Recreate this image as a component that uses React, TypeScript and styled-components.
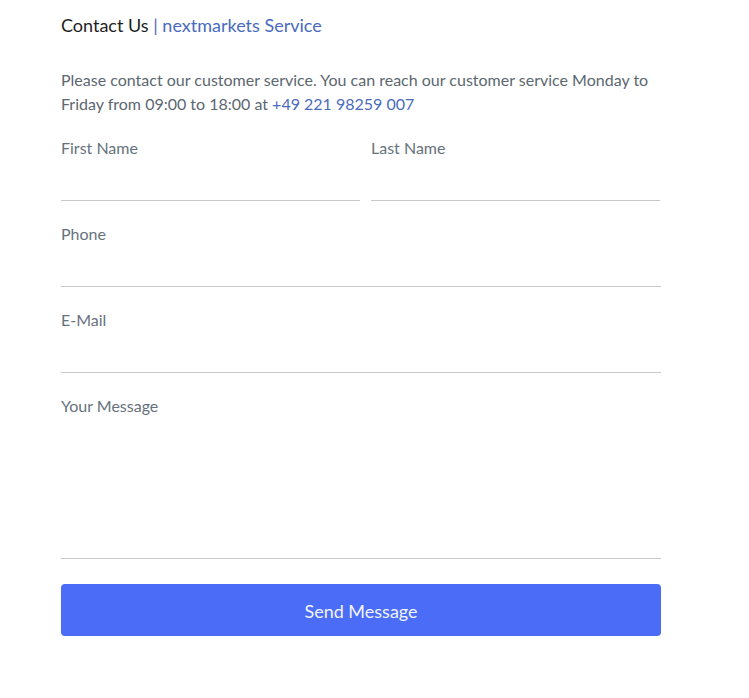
import React from "react";
import styled, { createGlobalStyle } from "styled-components";

const Global = createGlobalStyle`
  html, body { margin: 0; padding: 0; background: #fff; }
  body { font-family: Lato, "Open Sans", sans-serif; }
  * { box-sizing: border-box; }
`;

const Page = styled.div`
  width: 600px;
  margin-left: 61px;
  padding-top: 13px;
`;

const Title = styled.h1`
  margin: 0;
  font-size: 18px;
  line-height: 24px;
  font-weight: 400;
  color: #1e1e1e;
`;

const Accent = styled.span`
  color: #4a6bbd;
`;

const Intro = styled.p`
  margin: 31px 0 23px;
  font-size: 16px;
  line-height: 24px;
  color: #5c6770;
`;

const Form = styled.form`
  display: flex;
  flex-direction: column;
  gap: 24px;
`;

const Row = styled.div`
  display: grid;
  grid-template-columns: 299px 289px;
  column-gap: 11px;
`;

const Field = styled.label`
  display: flex;
  flex-direction: column;
`;

const Label = styled.span`
  font-size: 16px;
  line-height: 18px;
  color: #66727c;
`;

const Input = styled.input`
  height: 44px;
  border: none;
  border-bottom: 1px solid #c8c8c8;
  outline: none;
  font: inherit;
  font-size: 15px;
  background: transparent;
`;

const TextArea = styled.textarea`
  height: 144px;
  border: none;
  border-bottom: 1px solid #c8c8c8;
  outline: none;
  resize: none;
  font: inherit;
  background: transparent;
`;

const Button = styled.button`
  margin-top: 1px;
  height: 52px;
  padding-top: 2px;
  border: none;
  border-radius: 4px;
  background: #4a6cf7;
  color: #f2f4ff;
  font-family: Lato, sans-serif;
  font-size: 18px;
  cursor: pointer;
`;

export default function App() {
  return (
    <>
      <Global />
      <Page>
        <Title>
          Contact Us <Accent>| nextmarkets Service</Accent>
        </Title>
        <Intro>
          Please contact our customer service. You can reach our customer service Monday to
          Friday from 09:00 to 18:00 at <Accent>+49 221 98259 007</Accent>
        </Intro>
        <Form onSubmit={(e) => e.preventDefault()}>
          <Row>
            <Field>
              <Label>First Name</Label>
              <Input type="text" />
            </Field>
            <Field>
              <Label>Last Name</Label>
              <Input type="text" />
            </Field>
          </Row>
          <Field>
            <Label>Phone</Label>
            <Input type="tel" />
          </Field>
          <Field>
            <Label>E-Mail</Label>
            <Input type="email" />
          </Field>
          <Field>
            <Label>Your Message</Label>
            <TextArea />
          </Field>
          <Button type="submit">Send Message</Button>
        </Form>
      </Page>
    </>
  );
}
